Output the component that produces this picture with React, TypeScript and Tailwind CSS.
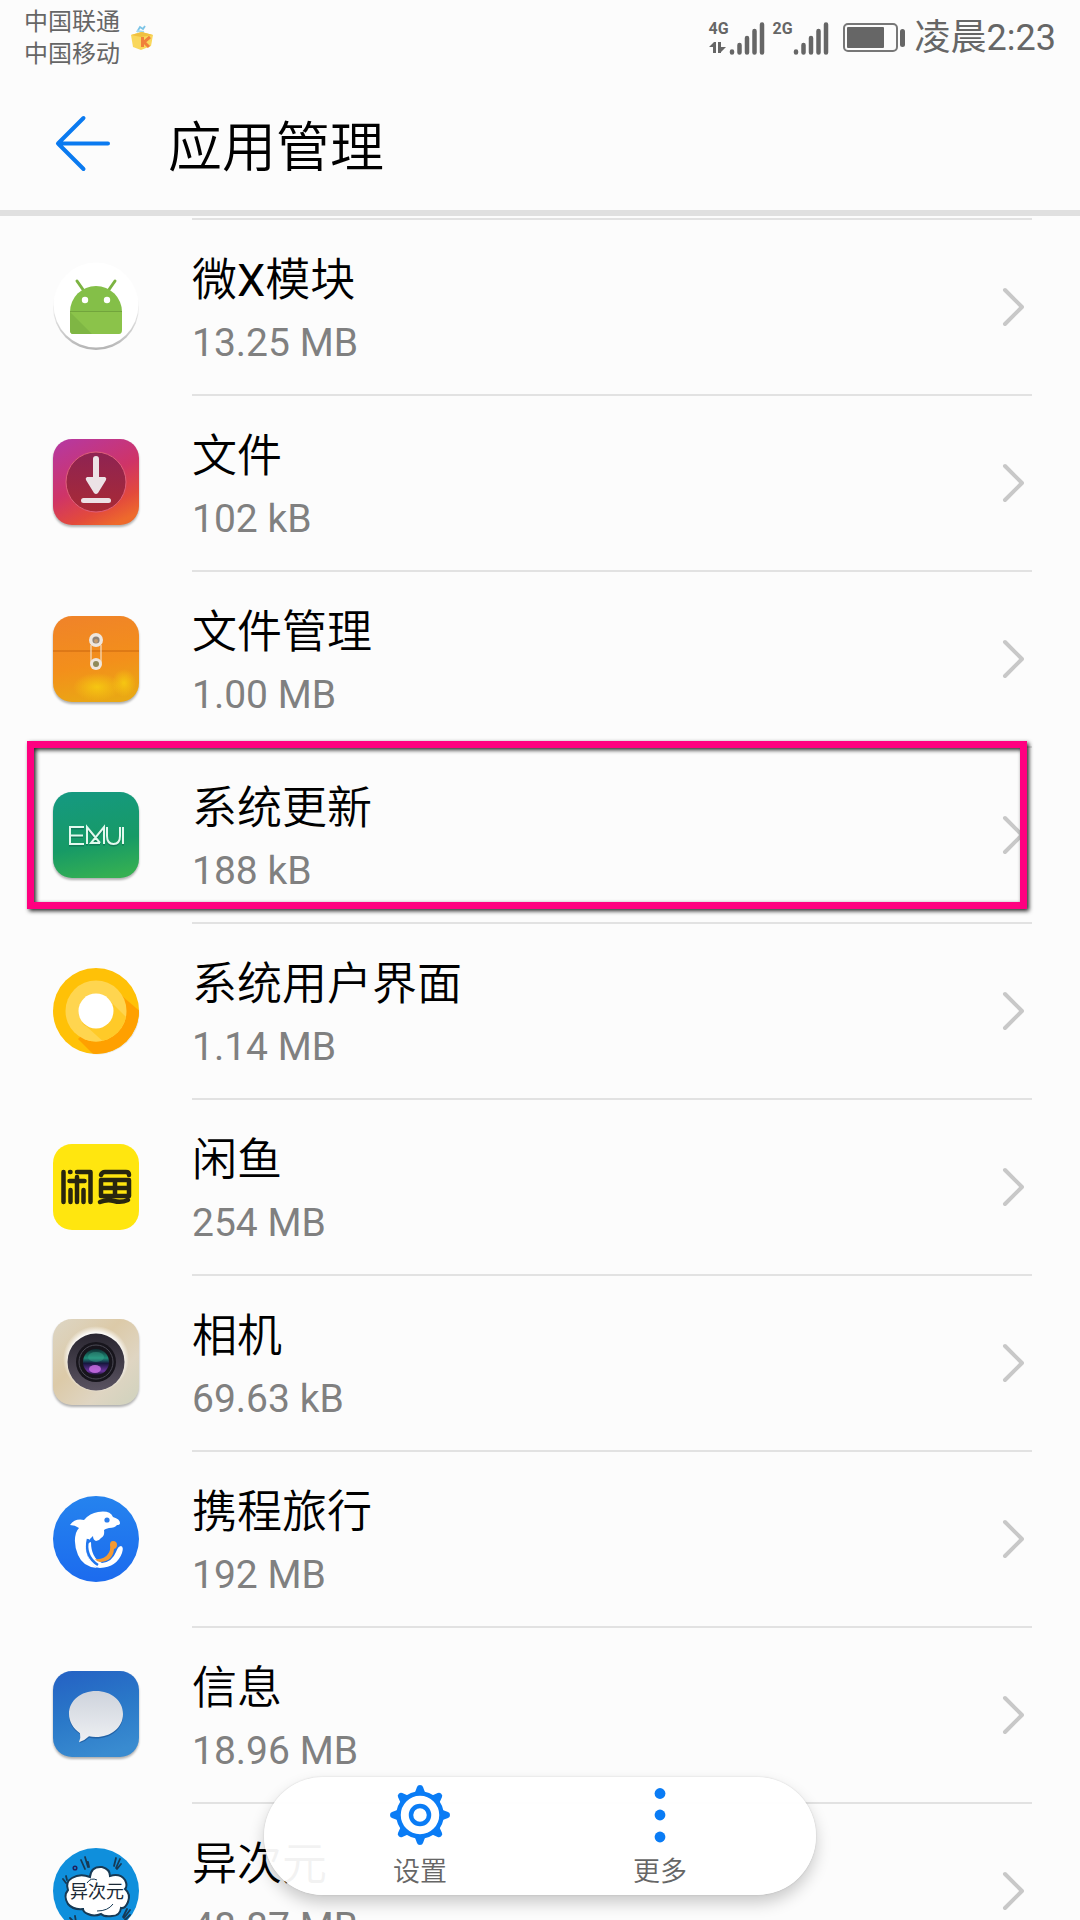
import type { ReactNode } from "react";

type AppEntry = {
  name: string;
  size: string;
  icon: ReactNode;
  highlighted?: boolean;
};

const tileShadow = "h-[92px] w-[92px] drop-shadow-[0_2px_1px_rgba(0,0,0,0.3)]";
const plainTile = "h-[92px] w-[92px]";

/* APP ICONS, all on a 92x92 grid with a 3px margin */
const AndroidIcon = () => (
  <svg viewBox="0 0 92 92" className={plainTile} aria-hidden="true">
    <defs>
      <linearGradient id="discRim" x1="0" y1="0" x2="0" y2="1">
        <stop offset="0.4" stopColor="#fcfcfc" />
        <stop offset="1" stopColor="#b4b4b4" />
      </linearGradient>
    </defs>
    <circle cx="46" cy="46" r="43" fill="url(#discRim)" />
    <circle cx="46" cy="44" r="42.4" fill="#fff" />
    <path d="M27 20l7 10M65 20l-7 10" stroke="#7cb342" strokeWidth="3" strokeLinecap="round" />
    <path d="M20 51a26 26 0 0 1 52 0v1H20z" fill="#84bf48" />
    <path d="M20 51h52v18q0 4-3 4H23q-3 0-3-4z" fill="#8bc34a" />
    <path d="M20 51l22 22H23q-3 0-3-4z" fill="#7fb644" />
    <path d="M20 50.500h52" stroke="#72a53c" strokeWidth="1" />
    <circle cx="35" cy="39" r="3.2" fill="#fff" />
    <circle cx="57" cy="39" r="3.2" fill="#fff" />
  </svg>
);

const DownloadIcon = () => (
  <svg viewBox="0 0 92 92" className={tileShadow} aria-hidden="true">
    <defs>
      <linearGradient id="dlBg" x1="0.2" y1="0" x2="0.7" y2="1">
        <stop offset="0" stopColor="#b8389c" />
        <stop offset="0.5" stopColor="#cf3467" />
        <stop offset="0.8" stopColor="#e34a3c" />
        <stop offset="1" stopColor="#ee6a2c" />
      </linearGradient>
      <linearGradient id="dlDisc" x1="0" y1="0" x2="0" y2="1">
        <stop offset="0" stopColor="#8e2353" />
        <stop offset="1" stopColor="#a92a35" />
      </linearGradient>
    </defs>
    <rect x="3" y="2" width="86" height="86" rx="19" fill="url(#dlBg)" />
    <circle cx="46" cy="45" r="30" fill="url(#dlDisc)" stroke="#e0607a" strokeWidth="1" />
    <path d="M43 22q0-3 3-3t3 3v18h6q2 1 1 3L48 56q-2 2-4 0l-8-13q-1-2 1-3h6z" fill="#ece2e6" />
    <rect x="31" y="61" width="30" height="5" rx="2.5" fill="#ece2e6" />
  </svg>
);

const FilesIcon = () => (
  <svg viewBox="0 0 92 92" className={tileShadow} aria-hidden="true">
    <defs>
      <linearGradient id="fmBg" x1="0.4" y1="0" x2="0.6" y2="1">
        <stop offset="0" stopColor="#f08428" />
        <stop offset="0.55" stopColor="#f38f1b" />
        <stop offset="1" stopColor="#e9a814" />
      </linearGradient>
      <radialGradient id="fmGlow">
        <stop offset="0" stopColor="#f8d010" stopOpacity="0.8" />
        <stop offset="1" stopColor="#f8d010" stopOpacity="0" />
      </radialGradient>
    </defs>
    <rect x="3" y="3" width="86" height="86" rx="19" fill="url(#fmBg)" />
    <ellipse cx="47" cy="74" rx="24" ry="14" fill="url(#fmGlow)" />
    <ellipse cx="74" cy="70" rx="12" ry="14" fill="url(#fmGlow)" />
    <path d="M3 38h86" stroke="#c9660f" strokeWidth="1" />
    <path d="M41 32v18M51 32v18" stroke="#f6dcc0" strokeWidth="1.2" />
    <circle cx="46" cy="27" r="7" fill="#eee6de" />
    <circle cx="46" cy="27" r="3.6" fill="#8f8378" />
    <circle cx="46" cy="28" r="2" fill="#c59a6c" />
    <circle cx="46" cy="51" r="6" fill="#eee6de" />
    <circle cx="46" cy="51" r="3" fill="#8f8a5a" />
  </svg>
);

const EmuiIcon = () => (
  <svg viewBox="0 0 92 92" className={tileShadow} aria-hidden="true">
    <defs>
      <linearGradient id="emBg" x1="0.4" y1="0" x2="0.6" y2="1">
        <stop offset="0" stopColor="#15997f" />
        <stop offset="0.6" stopColor="#179a66" />
        <stop offset="1" stopColor="#35b052" />
      </linearGradient>
    </defs>
    <rect x="3" y="3" width="86" height="86" rx="19" fill="url(#emBg)" />
    <g fill="none" stroke="#0b5c47" strokeOpacity="0.5" strokeWidth="2" transform="translate(0 1.5)">
      <path d="M34 38H20v17h14M20 46.500h13M37 55V38l13 16M54 55V38L41 54h9M57 38v9q0 8 6.500 8t6.500-8v-9M73 38v17" />
    </g>
    <g fill="none" stroke="#e2f8ee" strokeWidth="2">
      <path d="M34 38H20v17h14M20 46.500h13M37 55V38l13 16M54 55V38L41 54h9M57 38v9q0 8 6.500 8t6.500-8v-9M73 38v17" />
    </g>
  </svg>
);

const SystemUiIcon = () => (
  <svg viewBox="0 0 92 92" className={plainTile} aria-hidden="true">
    <defs>
      <clipPath id="oreoClip">
        <circle cx="46" cy="46" r="43" />
      </clipPath>
      <clipPath id="oreoInner">
        <circle cx="46" cy="46" r="30.500" />
      </clipPath>
    </defs>
    <circle cx="48" cy="48" r="41.500" fill="#e9e9e9" />
    <circle cx="46" cy="46" r="43" fill="#ffc107" />
    <g clipPath="url(#oreoClip)">
      <path d="M72 31L92 48V92H46L28 74z" fill="#ffa000" />
    </g>
    <circle cx="46" cy="46" r="30.500" fill="#ffd54f" />
    <g clipPath="url(#oreoInner)">
      <path d="M58 34l24 24-24 24-26-24z" fill="#ffca28" />
      <path d="M36 61L56 79 40 82 26 62z" fill="#ffd54f" />
    </g>
    <circle cx="46" cy="46" r="17.500" fill="#fff" />
  </svg>
);

const XianyuIcon = () => (
  <svg viewBox="0 0 92 92" className={plainTile} aria-hidden="true">
    <rect x="3" y="3" width="86" height="86" rx="19" fill="#ffe60f" />
    <g fill="none" stroke="#28260f" strokeWidth="4.500" strokeLinecap="round" strokeLinejoin="round">
      <path d="M13.500 31v30M20 31h.5M27 31h13.500v30M19.500 40h15M27 36v25M20.500 49v12M33.500 49v12" />
      <path d="M51 34q1-3 4-3h21q3 0 3 3" />
      <path d="M51 39h28v16H51zM51 47h28M65 39v16M50 61q7-3 14-1t14-1" />
    </g>
  </svg>
);

const CameraIcon = () => (
  <svg viewBox="0 0 92 92" className={tileShadow} aria-hidden="true">
    <defs>
      <linearGradient id="camBg" x1="0" y1="0" x2="1" y2="1">
        <stop offset="0" stopColor="#ddd6c5" />
        <stop offset="0.4" stopColor="#dccaa8" />
        <stop offset="0.7" stopColor="#dfd5c2" />
        <stop offset="1" stopColor="#cfd2bd" />
      </linearGradient>
      <linearGradient id="camRing" x1="0" y1="0" x2="0" y2="1">
        <stop offset="0" stopColor="#292630" />
        <stop offset="1" stopColor="#5a5361" />
      </linearGradient>
      <linearGradient id="camLens" x1="0" y1="0" x2="0" y2="1">
        <stop offset="0" stopColor="#0d2b30" />
        <stop offset="0.35" stopColor="#1f8d78" />
        <stop offset="0.55" stopColor="#16163e" />
        <stop offset="0.85" stopColor="#6c33a0" />
        <stop offset="1" stopColor="#19122c" />
      </linearGradient>
      <radialGradient id="camHalo">
        <stop offset="0.8" stopColor="#fff" stopOpacity="0.9" />
        <stop offset="1" stopColor="#fff" stopOpacity="0" />
      </radialGradient>
    </defs>
    <rect x="3" y="2" width="86" height="86" rx="19" fill="url(#camBg)" />
    <circle cx="46" cy="42" r="33" fill="url(#camHalo)" />
    <circle cx="46" cy="45" r="28.500" fill="url(#camRing)" />
    <circle cx="46" cy="45" r="20" fill="#17151c" />
    <circle cx="46" cy="45" r="17" fill="none" stroke="#4b4a55" strokeWidth="1" />
    <circle cx="46" cy="45" r="13" fill="url(#camLens)" />
    <ellipse cx="46" cy="40" rx="8" ry="5" fill="#3fae94" opacity="0.4" />
    <ellipse cx="45" cy="52" rx="6" ry="4" fill="#cf72e8" opacity="0.8" />
  </svg>
);

const CtripIcon = () => (
  <svg viewBox="0 0 92 92" className={plainTile} aria-hidden="true">
    <defs>
      <linearGradient id="ctBg" x1="0" y1="0" x2="0" y2="1">
        <stop offset="0" stopColor="#2583ee" />
        <stop offset="1" stopColor="#1c6bee" />
      </linearGradient>
    </defs>
    <circle cx="46" cy="46" r="43" fill="url(#ctBg)" />
    <path
      d="M20 32q5-7 14-5 6-7 14-8 12-2 15 5 7 2 7 6 0 2-3 2-2 3-8 3-4 1-5 2 1 6-3 8-2 3-5 3-3-1-3-5-8 7-7 14 2 12 11 18-14-1-19-13-5-12-2-22 1-3 3-5-4-3-9-3z"
      fill="#fff"
    />
    <path d="M41 49q0 16 11 21 10-1 14-11 2-6 5-6 3 1 1 7-5 14-22 15-12-1-14-20 2-6 5-6z" fill="#fff" />
    <path d="M38 46q-4 17 10 26" fill="none" stroke="#2076ee" strokeWidth="2.500" />
    <path d="M60 52q0-4 3-4 4 0 4 4 0 3-3 4-1 12-13 13-4 0-6-3 9 1 13-5 3-4 2-9z" fill="#f59a32" />
    <circle cx="57" cy="27" r="2.600" fill="#2a7ded" />
  </svg>
);

const MessagesIcon = () => (
  <svg viewBox="0 0 92 92" className={tileShadow} aria-hidden="true">
    <defs>
      <linearGradient id="msBg" x1="0.2" y1="0" x2="0.5" y2="1">
        <stop offset="0" stopColor="#2563c4" />
        <stop offset="0.5" stopColor="#2a78c8" />
        <stop offset="1" stopColor="#398bd0" />
      </linearGradient>
      <linearGradient id="msBubble" x1="0" y1="0" x2="0" y2="1">
        <stop offset="0" stopColor="#ced3dc" />
        <stop offset="1" stopColor="#eef0f3" />
      </linearGradient>
    </defs>
    <rect x="3" y="2" width="86" height="86" rx="19" fill="url(#msBg)" />
    <path
      d="M46 24c15 0 27 9 27 22.500S61 69.500 46 69.500q-4 0-7-.8-4 4-9 5.300 1-4 0-9C23 61 19 54 19 46.500 19 33 31 24 46 24z"
      fill="#174c8c"
      opacity="0.6"
    />
    <path
      d="M46 22c15 0 27 9.500 27 23S61 68 46 68q-4 0-7-.8-4 4-10 6 2-4 1-9C23 59.500 19 52 19 45c0-13.500 12-23 27-23z"
      fill="url(#msBubble)"
    />
  </svg>
);

const YiciyuanIcon = () => (
  <svg viewBox="0 0 92 92" className={plainTile} aria-hidden="true">
    <circle cx="46" cy="46" r="43" fill="#0f8fdc" />
    <g stroke="#173a55" strokeWidth="1.800" strokeLinecap="round">
      <path d="M31 15l4 9M35 12l3 10M38 17l1 5M70 14l-4 9M66 13l-2 8M71 19l-4 5M80 65l-6 8M77 64l-4 8M80 70l-5 5M13 34l3 4M16 31l1 4M20 73l4 4M25 71l1 6" />
    </g>
    <path
      d="M40 32q1-11 12-10 8 2 8 9 10-3 15 4 3 6 0 9 6 5 3 13-3 7-7 6-1 8-9 8-8 1-11-2-7 3-13 0-5-2-5-5-10 1-15-5-5-8 0-14-3-8 4-12 8-5 18-1z"
      fill="#fff"
      stroke="#173a55"
      strokeWidth="2"
    />
    <circle cx="25" cy="23" r="1.800" fill="none" stroke="#20205f" strokeWidth="1.500" />
    <path d="M37 38q4-6 10-3M47 66q11 0 16-7" fill="none" stroke="#173a55" strokeWidth="1" />
    <text
      x="47"
      y="53"
      textAnchor="middle"
      className="fill-[#1c2a36] font-['Noto_Sans_CJK_SC',sans-serif] text-[18px] font-normal"
    >
      异次元
    </text>
  </svg>
);

const apps: AppEntry[] = [
  { name: "微X模块", size: "13.25 MB", icon: <AndroidIcon /> },
  { name: "文件", size: "102 kB", icon: <DownloadIcon /> },
  { name: "文件管理", size: "1.00 MB", icon: <FilesIcon /> },
  { name: "系统更新", size: "188 kB", icon: <EmuiIcon />, highlighted: true },
  { name: "系统用户界面", size: "1.14 MB", icon: <SystemUiIcon /> },
  { name: "闲鱼", size: "254 MB", icon: <XianyuIcon /> },
  { name: "相机", size: "69.63 kB", icon: <CameraIcon /> },
  { name: "携程旅行", size: "192 MB", icon: <CtripIcon /> },
  { name: "信息", size: "18.96 MB", icon: <MessagesIcon /> },
  { name: "异次元", size: "48.87 MB", icon: <YiciyuanIcon /> },
];

const SignalBars = () => (
  <svg viewBox="0 0 36 34" className="h-[34px] w-9" aria-hidden="true">
    <g stroke="#666" strokeWidth="4.500" strokeLinecap="round">
      <path d="M3 30.500v1M10.500 24v7.500M18 17v14.500M25.500 10v21.500M33 3.500v28" />
    </g>
  </svg>
);

const NetworkLabel = ({ label, data }: { label: string; data?: boolean }) => (
  <div className="flex h-[34px] w-5 flex-col">
    <span className="font-['Roboto',sans-serif] text-base leading-4 font-bold">{label}</span>
    {data && (
      <svg viewBox="0 0 18 13" className="mt-1 h-[13px] w-[18px]" aria-hidden="true">
        <path d="M0 6l5-5h2v11H4V6zM9 1h3v5h5l-5 5v1H9z" fill="#666" />
      </svg>
    )}
  </div>
);

const StatusBar = () => (
  <div className="flex h-[74px] shrink-0 items-center justify-between px-6 pt-0.5 text-[#666]">
    <div className="flex items-center gap-2">
      <div className="flex flex-col text-2xl leading-8">
        <span>中国联通</span>
        <span>中国移动</span>
      </div>
      <svg viewBox="0 0 28 28" className="h-7 w-7" aria-hidden="true">
        <path d="M9 8l3-5 3 2 2-3" stroke="#7cc4e6" strokeWidth="1.800" fill="none" />
        <path d="M9 7l7 1" stroke="#a5d8ee" strokeWidth="2" />
        <path d="M3 11l10-3 12 3-2 11-10 4-8-3z" fill="#f9d75c" />
        <path d="M3 11l10 2 12-2-11-3z" fill="#f0c040" />
        <path d="M14.500 13v10M22 13l-6 5 5 5" stroke="#f0803c" strokeWidth="3" fill="none" />
      </svg>
    </div>
    <div className="flex items-center">
      <NetworkLabel label="4G" data />
      <SignalBars />
      <span className="w-2" />
      <NetworkLabel label="2G" />
      <SignalBars />
      <svg viewBox="0 0 62 30" className="mr-2.5 ml-3.5 h-[30px] w-[62px]" aria-hidden="true">
        <rect x="1" y="1" width="53" height="27" rx="4" fill="none" stroke="#777" strokeWidth="2" />
        <rect x="4" y="4" width="37" height="21" rx="1" fill="#666" />
        <rect x="57" y="6" width="5" height="18" rx="2.500" fill="#666" />
      </svg>
      <span className="text-4xl">凌晨2:23</span>
    </div>
  </div>
);

const Header = () => (
  <header className="flex h-[142px] shrink-0 items-center gap-14 border-b-[6px] border-[#e0e0e0] pt-0.5 pl-[54px]">
    <button type="button" aria-label="返回">
      <svg viewBox="0 0 58 58" className="h-[58px] w-[58px]" fill="none" aria-hidden="true">
        <path
          d="M29.500 4L4 29.500 29.500 55M4 29.500h50"
          stroke="#0a7af0"
          strokeWidth="4"
          strokeLinecap="round"
          strokeLinejoin="round"
        />
      </svg>
    </button>
    <h1 className="pt-3 text-[54px] leading-[72px] font-[350]">应用管理</h1>
  </header>
);

/* Latin letters keep the regular weight, Chinese characters use the lighter one */
const AppName = ({ name }: { name: string }) => (
  <span className="text-[45px] leading-[66px] font-[350]">
    {name.split(/([A-Za-z]+)/).map((part, i) =>
      i % 2 === 1 ? (
        <span key={i} className="font-normal">
          {part}
        </span>
      ) : (
        part
      )
    )}
  </span>
);

const AppRow = ({ app }: { app: AppEntry }) => (
  <li className="relative">
    <a href="#" className="flex h-44 items-center pr-12 pl-[50px]">
      <span className="pt-0.5">{app.icon}</span>
      <div className="ml-[50px] flex h-full flex-1 items-center justify-between border-t-2 border-[#e2e2e2] pr-2">
        <div className="flex flex-col pt-1.5">
          <AppName name={app.name} />
          <span className="text-[39px] leading-[58px] text-[#808080]">{app.size}</span>
        </div>
        <svg viewBox="0 0 22 40" className="h-10 w-[22px]" fill="none" aria-hidden="true">
          <path d="M3 3l17 17L3 37" stroke="#c8c8c8" strokeWidth="4" strokeLinecap="round" strokeLinejoin="round" />
        </svg>
      </div>
    </a>
    {app.highlighted && (
      <div className="pointer-events-none absolute -top-[5px] right-[53px] left-[27px] h-[168px] border-[7px] border-[#ff0080] drop-shadow-[2px_2px_2px_rgba(0,0,0,0.85)]" />
    )}
  </li>
);

const GearIcon = () => (
  <svg viewBox="0 0 60 60" className="h-[60px] w-[60px]" aria-hidden="true">
    <g fill="#0a7cf5">
      {[0, 45, 90, 135, 180, 225, 270, 315].map((angle) => (
        <path key={angle} d="M24 10l3-8q.5-2 3-2t3 2l3 8z" transform={`rotate(${angle} 30 30)`} />
      ))}
    </g>
    <circle cx="30" cy="30" r="21.500" fill="#fff" stroke="#0a7cf5" strokeWidth="4.500" />
    <circle cx="30" cy="30" r="9" fill="none" stroke="#0a7cf5" strokeWidth="4.500" />
  </svg>
);

const MoreIcon = () => (
  <svg viewBox="0 0 60 60" className="h-[60px] w-[60px]" fill="#0a7cf5" aria-hidden="true">
    <circle cx="30" cy="8.500" r="5.400" />
    <circle cx="30" cy="30" r="5.400" />
    <circle cx="30" cy="52" r="5.400" />
  </svg>
);

const FloatingMenu = () => (
  <nav className="absolute bottom-[25px] left-1/2 flex h-[118px] -translate-x-1/2 rounded-full bg-white/95 px-9 shadow-[0_8px_16px_rgba(0,0,0,0.2),0_0_2px_rgba(0,0,0,0.15)]">
    <button type="button" className="flex w-60 flex-col items-center pt-2">
      <GearIcon />
      <span className="mt-2 text-[27px] leading-[38px] font-[350] text-[#666]">设置</span>
    </button>
    <button type="button" className="flex w-60 flex-col items-center pt-2">
      <MoreIcon />
      <span className="mt-2 text-[27px] leading-[38px] font-[350] text-[#666]">更多</span>
    </button>
  </nav>
);

function App() {
  return (
    <div className="relative flex h-screen w-full flex-col overflow-hidden bg-[#fcfcfc] font-['Roboto','Noto_Sans_CJK_SC',sans-serif] text-black">
      <StatusBar />
      <Header />
      <ul className="min-h-0 flex-1 overflow-y-auto pt-0.5 [scrollbar-width:none]">
        {apps.map((app) => (
          <AppRow key={app.name} app={app} />
        ))}
      </ul>
      <FloatingMenu />
    </div>
  );
}

export default App;
